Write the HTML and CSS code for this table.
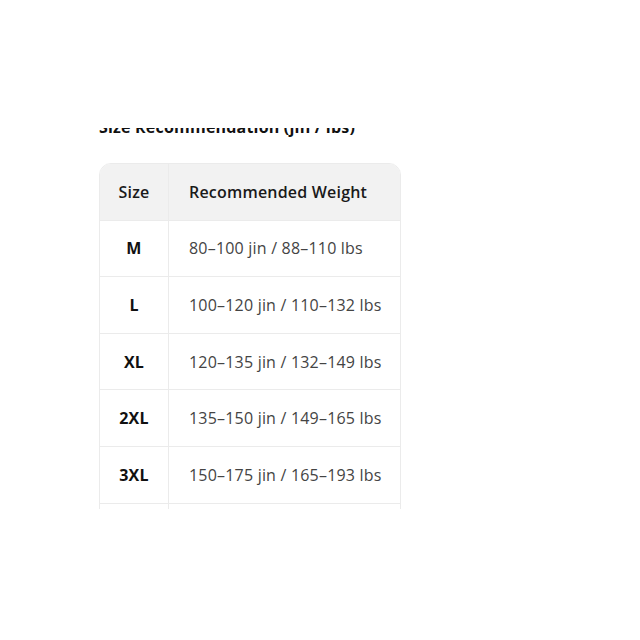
FILE: index.html
```html
<!DOCTYPE html>
<html>
<head>
<meta charset="utf-8">
<link rel="stylesheet" href="styles.css">
</head>
<body>
<div class="viewport">
  <div class="content">
    <h3 class="title">Size Recommendation (jin / lbs)</h3>
    <table class="size-table">
      <thead>
        <tr><th class="c-size">Size</th><th class="c-weight">Recommended Weight</th></tr>
      </thead>
      <tbody>
        <tr><td class="c-size">M</td><td class="c-weight">80–100 jin / 88–110 lbs</td></tr>
        <tr><td class="c-size">L</td><td class="c-weight">100–120 jin / 110–132 lbs</td></tr>
        <tr><td class="c-size">XL</td><td class="c-weight">120–135 jin / 132–149 lbs</td></tr>
        <tr><td class="c-size">2XL</td><td class="c-weight">135–150 jin / 149–165 lbs</td></tr>
        <tr><td class="c-size">3XL</td><td class="c-weight">150–175 jin / 165–193 lbs</td></tr>
        <tr><td class="c-size">4XL</td><td class="c-weight">175–200 jin / 193–220 lbs</td></tr>
      </tbody>
    </table>
  </div>
</div>
</body>
</html>
```
FILE: styles.css
```css
html, body {
  margin: 0;
  padding: 0;
  background: #ffffff;
}
body {
  font-family: "Open Sans", "Noto Sans", sans-serif;
  color: #1a1a1a;
  letter-spacing: 0.2px;
}
.viewport {
  margin-top: 128px;
  margin-left: 99px;
  width: 320px;
  height: 381px;
  overflow: hidden;
}
.content {
  margin-top: -13px;
}
.title {
  margin: 0 0 24px 0;
  font-size: 16px;
  line-height: 24px;
  font-weight: 700;
  color: #111;
}
.size-table {
  width: 302px;
  table-layout: fixed;
  border-collapse: separate;
  border-spacing: 0;
  border: 1px solid #ebebeb;
  border-radius: 12px;
  overflow: hidden;
  font-size: 16px;
  line-height: 24px;
}
.size-table th, .size-table td {
  padding: 15.8px 20px;
  border-bottom: 1px solid #ebebeb;
}
.size-table th {
  background: #f2f2f2;
  font-weight: 600;
  color: #1a1a1a;
}
.size-table .c-size {
  width: 68px;
  padding-left: 0;
  padding-right: 0;
  text-align: center;
  border-right: 1px solid #ebebeb;
}
.size-table td.c-size {
  font-weight: 700;
  color: #111;
}
.size-table .c-weight {
  text-align: left;
  white-space: nowrap;
}
.size-table td.c-weight {
  color: #444;
}
```
